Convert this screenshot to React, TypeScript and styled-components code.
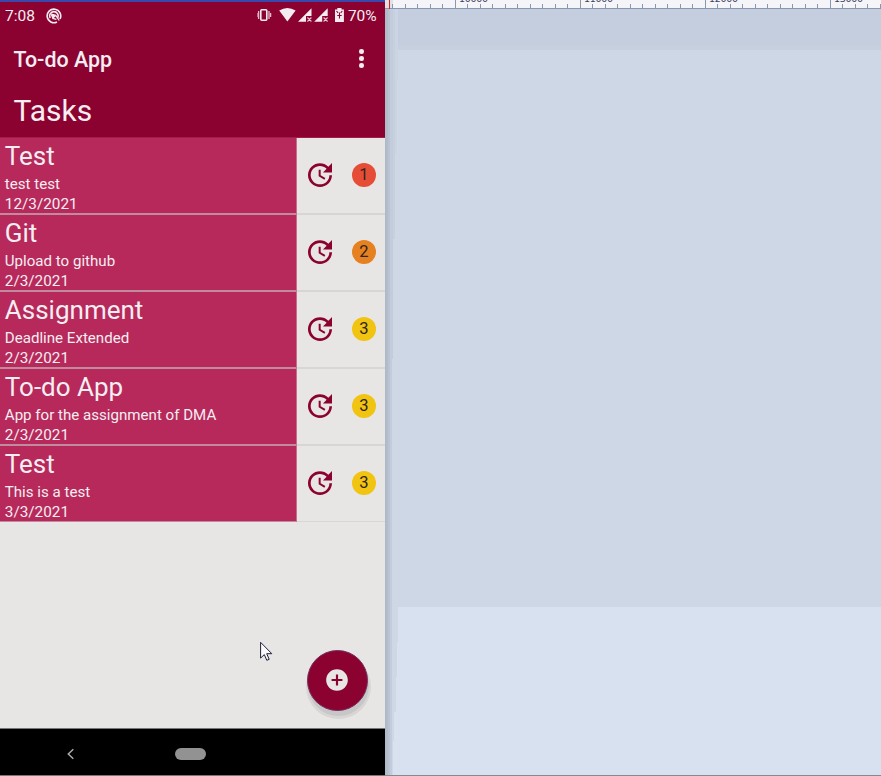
import React from "react";
import styled, { createGlobalStyle } from "styled-components";
import { MdUpdate, MdAddCircle } from "react-icons/md";

const GlobalStyle = createGlobalStyle`
  * { box-sizing: border-box; }
  html, body, #root { margin: 0; padding: 0; }
  body { width: 881px; height: 776px; overflow: hidden; font-family: Roboto, sans-serif; }
`;

const Desktop = styled.div`
  position: relative;
  display: grid;
  grid-template-columns: 385px 1fr;
  width: 881px;
  height: 776px;
  overflow: hidden;
  background: #ced7e5;
`;

const Phone = styled.main`
  display: flex;
  flex-direction: column;
  height: 776px;
  background: #e8e6e4;
  color: #f5eef2;
`;

const Header = styled.header`
  flex: none;
  height: 137px;
  border-top: 2px solid #3949ab;
  background: #8b0231;
`;

const StatusBar = styled.div`
  display: flex;
  align-items: center;
  height: 28px;
  padding: 0 8px 0 5px;
  font-size: 15.5px;
  line-height: 28px;
`;

const Clock = styled.span`
  width: 41px;
`;

const StatusIcons = styled.div`
  display: flex;
  margin-left: auto;
  height: 28px;
`;

const Battery = styled.span`
  width: 29px;
  letter-spacing: -0.1px;
  white-space: nowrap;
`;

const AppBar = styled.div`
  display: flex;
  align-items: center;
  justify-content: space-between;
  height: 58px;
  padding: 0 21px 0 13.4px;
`;

const AppTitle = styled.h1`
  margin: 0;
  font-size: 21.4px;
  font-weight: 500;
`;

const Dots = styled.div`
  display: grid;
  gap: 2.2px;
  margin-top: -1px;
`;

const Dot = styled.i`
  width: 4.6px;
  height: 4.6px;
  border-radius: 50%;
  background: #f2edf0;
`;

const PageTitle = styled.h2`
  margin: 0;
  padding-left: 13.5px;
  font-size: 30px;
  line-height: 46px;
  font-weight: 400;
`;

const TaskList = styled.div`
  flex: 1;
  border-top: 1px solid #a51b4a;
`;

const TaskRow = styled.article`
  display: grid;
  grid-template-columns: 297px 48px 1fr;
  grid-template-rows: 77px;
  height: 77px;
`;

const TaskText = styled.div`
  height: 100%;
  padding: 0.5px 0 0 4.8px;
  overflow: hidden;
  background: #b7295b;
  border-bottom: 2px solid #c08a9f;
  border-right: 1px solid #c96c8d;

  ${TaskRow}:last-child & {
    height: 76px;
    border-bottom-width: 1px;
  }
`;

const TaskTitle = styled.h3`
  margin: 0 0 1px;
  font-size: 26px;
  line-height: 34px;
  font-weight: 400;
`;

const TaskLine = styled.p<{ $date?: boolean }>`
  margin: 0;
  font-size: ${(p) => (p.$date ? "15.3px" : "15.1px")};
  line-height: 20.4px;
`;

const Action = styled.div`
  display: flex;
  align-items: center;
  height: 100%;
  padding: 0 0 1px 7px;
  border-bottom: 2px solid #d8d6d5;
  color: #8b0231;

  ${TaskRow}:last-child & {
    height: 76px;
    border-bottom-width: 1px;
  }
`;

const Badge = styled.span<{ $color: string }>`
  width: 24px;
  height: 24px;
  border-radius: 50%;
  background: ${(p) => p.$color};
  color: #30231c;
  font-size: 16.5px;
  line-height: 24.5px;
  text-align: center;
`;

const Fab = styled.button`
  position: absolute;
  left: 307px;
  top: 650px;
  display: grid;
  place-items: center;
  width: 61px;
  height: 61px;
  padding: 0 1px 1px 0;
  border: 1px solid #75305f;
  border-radius: 50%;
  background: #8b0231;
  color: #e8e6e4;
  box-shadow: 1px 5px 0 0 #c8c7c8, 1px 6px 0 2px #d8d6d5;
`;

const Pointer = styled.svg`
  position: absolute;
  left: 260px;
  top: 641px;
`;

const NavBar = styled.nav`
  display: flex;
  align-items: center;
  flex: none;
  height: 48px;
  padding: 4px 0 0 66px;
  border-top: 1px solid #777;
  border-bottom: 1px solid #777;
  background: #000;
`;

const HomePill = styled.span`
  width: 31px;
  height: 12px;
  margin-left: 100px;
  border-radius: 6px;
  background: #929292;
`;

const Workspace = styled.aside`
  position: relative;
  display: flex;
  flex-direction: column;
  height: 776px;
  border-bottom: 1px solid #858990;
`;

const Ruler = styled.svg`
  display: block;
  flex: none;
  background: #f4f4f9;
  font-family: "DejaVu Sans", sans-serif;
  font-size: 9.5px;
  fill: #39425a;
`;

const TopBand = styled.div`
  height: 41px;
  flex: none;
  background: linear-gradient(#c5cede 0 36px, #c7d0de 36px);
`;

const MiddleBand = styled.div`
  height: 557px;
  flex: none;
  background: #ced7e5;
`;

const LowerBand = styled.div`
  flex: 1;
  background: #d8e1ef;
  clip-path: polygon(13px 0, 100% 0, 100% 100%, 8px 100%, 8px 134px, 9px 134px, 9px 105px, 11px 105px, 11px 70px, 12px 70px, 12px 35px, 13px 35px);
`;

const EdgeShadow = styled.div`
  position: absolute;
  left: 0;
  top: 9px;
  bottom: 0;
  width: 13px;
  background: linear-gradient(90deg, #aeb8c6 0 1px, #b2bdcb 1px 3px, #b9c3d2 3px 5px, #c2ccdb 5px 8px, #c6d0df 8px 10px, #cad4e2 10px);
  clip-path: polygon(0 0, 100% 0, 100% 70px, 12px 70px, 12px 145px, 10px 145px, 10px 230px, 8px 230px, 8px 350px, 7px 350px, 7px 100%, 0 100%);
`;

const tasks = [
  { title: "Test", note: "test test", date: "12/3/2021", level: 1, color: "#e64d37" },
  { title: "Git", note: "Upload to github", date: "2/3/2021", level: 2, color: "#e68122" },
  { title: "Assignment", note: "Deadline Extended", date: "2/3/2021", level: 3, color: "#f0c410" },
  { title: "To-do App", note: "App for the assignment of DMA", date: "2/3/2021", level: 3, color: "#f0c410" },
  { title: "Test", note: "This is a test", date: "3/3/2021", level: 3, color: "#f0c410" },
];

const StatusGlyphs = () => (
  <svg width="91" height="28" viewBox="257 2 91 28" fill="#f3edf1">
    <rect x="260.8" y="9.8" width="6" height="10.4" rx="1" fill="none" stroke="#f3edf1" strokeWidth="1.6" />
    <path d="M258.6 11v8M269 11v8M256.9 13v4M270.6 13v4" stroke="#e0bccb" strokeWidth="1.3" />
    <path d="M279.2 10.6Q287.4 5.2 295.6 10.6L287.4 21.5Z" />
    <path d="M298 21.7L311.5 8.2V16H306v5.7Z" />
    <path d="M314.2 21.7L327.7 8.2V16h-5.5v5.7Z" />
    <path d="M307.4 17.5l4 4m0-4l-4 4M323.6 17.5l4 4m0-4l-4 4" stroke="#e6c5d2" strokeWidth="1.1" />
    <path d="M335 9.5h2.3V8h4.2v1.5h2.4V22H335Z" />
    <path d="M336.5 11l1.6 1.8m4.2-1.8l-1.6 1.8M339.5 12.5v6M337.3 15.5h4.4" stroke="#8b0231" strokeWidth="1.1" />
  </svg>
);

const DataSaver = () => (
  <svg width="16" height="16" viewBox="0 0 16 16" fill="none" stroke="#f3edf1" strokeWidth="1.6">
    <path d="M11 14A6.8 6.8 0 1 1 14 11M4.3 10A4.2 4.2 0 1 1 11.6 9.8" />
    <path d="M5.4 6.2l4.3 1.1 3.5 5.2M5.4 6.2l1.5 4.2 3.5 1" strokeWidth="1.3" />
    <path d="M5.2 5.8l5 2L7 10.7Z" fill="#f3edf1" stroke="none" />
  </svg>
);

const rulerTicks = Array.from({ length: 40 }, (_, i) => ({
  x: Math.floor(392.7 - 385 + i * 12.5),
  major: i % 10 === 5,
}));

export default function App() {
  return (
    <>
      <GlobalStyle />
      <Desktop>
        <Phone>
          <Header>
            <StatusBar>
              <Clock>7:08</Clock>
              <DataSaver />
              <StatusIcons><StatusGlyphs /></StatusIcons>
              <Battery>70%</Battery>
            </StatusBar>
            <AppBar>
              <AppTitle>To-do App</AppTitle>
              <Dots><Dot /><Dot /><Dot /></Dots>
            </AppBar>
            <PageTitle>Tasks</PageTitle>
          </Header>
          <TaskList>
            {tasks.map((task, i) => (
              <TaskRow key={i}>
                <TaskText>
                  <TaskTitle>{task.title}</TaskTitle>
                  <TaskLine>{task.note}</TaskLine>
                  <TaskLine $date>{task.date}</TaskLine>
                </TaskText>
                <Action><MdUpdate size={32} /></Action>
                <Action><Badge $color={task.color}>{task.level}</Badge></Action>
              </TaskRow>
            ))}
          </TaskList>
          <NavBar>
            <svg width="9" height="12" viewBox="0 0 9 12" fill="none" stroke="#aaa" strokeWidth="1.5">
              <path d="M7.3 1.2L2.3 6l5 4.8" />
            </svg>
            <HomePill />
          </NavBar>
        </Phone>
        <Workspace>
          <Ruler width="496" height="9">
            <rect width="8" height="9" fill="#dfe1e6" />
            {rulerTicks.map(({ x, major }, i) => (
              <rect key={i} x={x} y={major ? 0 : 4} width="1" height={major ? 9 : 5} fill="#8898b0" />
            ))}
            {[10000, 11000, 12000, 13000].map((n, i) => (
              <text key={n} x={74 + i * 125} y="2" textLength="29">{n}</text>
            ))}
            <rect y="8" width="496" height="1" fill="#8898b0" />
            <rect x="4" width="1" height="9" fill="#e41b23" />
          </Ruler>
          <TopBand />
          <MiddleBand />
          <LowerBand />
          <EdgeShadow />
        </Workspace>
        <Fab aria-label="Add task"><MdAddCircle size={26} /></Fab>
        <Pointer width="14" height="21" viewBox="0 0 14 21">
          <path d="M.6 1.3v15.8l3.7-3.5 2.5 5.7 2.4-1-2.5-5.6h5.1Z" fill="#fafaff" stroke="#202038" />
        </Pointer>
      </Desktop>
    </>
  );
}
